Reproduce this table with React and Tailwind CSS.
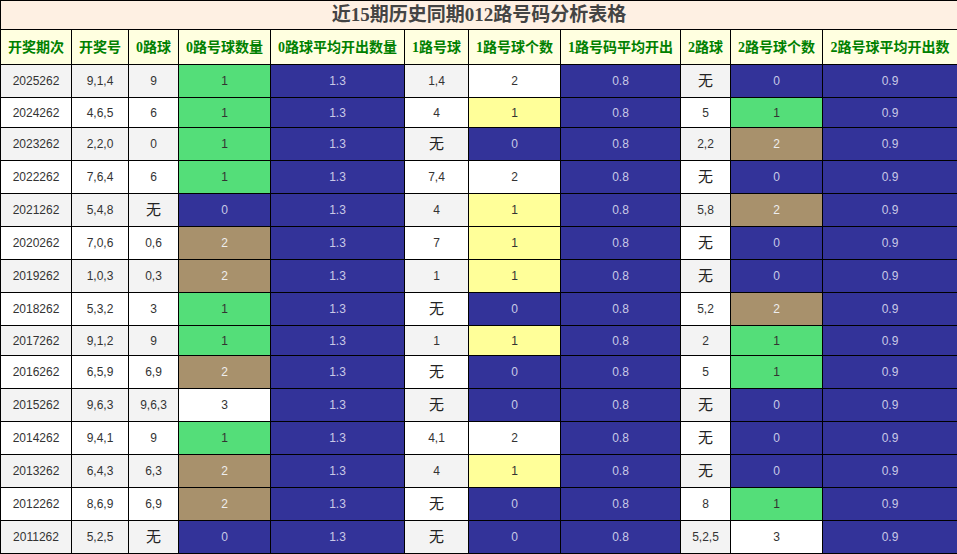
import React from "react";

const headers = [
  "开奖期次",
  "开奖号",
  "0路球",
  "0路号球数量",
  "0路球平均开出数量",
  "1路号球",
  "1路号球个数",
  "1路号码平均开出",
  "2路球",
  "2路号球个数",
  "2路号球平均开出数",
];

const widths = [71, 57, 50, 92, 134, 64, 92, 120, 50, 92, 135];

// [期次, 开奖号, 0路球, 0路个数, 1路球, 1路个数, 2路球, 2路个数]
const rows = [
  ["2025262", "9,1,4", "9", 1, "1,4", 2, "无", 0],
  ["2024262", "4,6,5", "6", 1, "4", 1, "5", 1],
  ["2023262", "2,2,0", "0", 1, "无", 0, "2,2", 2],
  ["2022262", "7,6,4", "6", 1, "7,4", 2, "无", 0],
  ["2021262", "5,4,8", "无", 0, "4", 1, "5,8", 2],
  ["2020262", "7,0,6", "0,6", 2, "7", 1, "无", 0],
  ["2019262", "1,0,3", "0,3", 2, "1", 1, "无", 0],
  ["2018262", "5,3,2", "3", 1, "无", 0, "5,2", 2],
  ["2017262", "9,1,2", "9", 1, "1", 1, "2", 1],
  ["2016262", "6,5,9", "6,9", 2, "无", 0, "5", 1],
  ["2015262", "9,6,3", "9,6,3", 3, "无", 0, "无", 0],
  ["2014262", "9,4,1", "9", 1, "4,1", 2, "无", 0],
  ["2013262", "6,4,3", "6,3", 2, "4", 1, "无", 0],
  ["2012262", "8,6,9", "6,9", 2, "无", 0, "8", 1],
  ["2011262", "5,2,5", "无", 0, "无", 0, "5,2,5", 3],
];

const cell = "border border-black text-center p-0";

const countStyle = (n, yellowOne) => {
  if (n === 0) return "bg-[#333399] text-[#c9c9e6]";
  if (n === 1) return yellowOne ? "bg-[#ffff99] text-[#333]" : "bg-[#54de79] text-[#333]";
  if (n === 2 && !yellowOne) return "bg-[#a8916c] text-[#eeeeee]";
  return "bg-white text-[#333]";
};

const Num = ({ v }) =>
  v === "无" ? (
    <span className="text-[15px] leading-none font-['Noto_Sans_CJK_SC',sans-serif] text-[#222]">无</span>
  ) : (
    v
  );

const App = () => {
  return (
    <div className="w-[957px] h-[554px] bg-white overflow-hidden font-['Liberation_Sans','Noto_Sans_CJK_SC',sans-serif] text-[12px] text-[#333]">
      <table className="w-[957px] table-fixed border-collapse">
        <colgroup>
          {widths.map((w, i) => (
            <col key={i} style={{ width: w }} />
          ))}
        </colgroup>
        <thead>
          <tr className="h-[29px]">
            <th
              colSpan={11}
              className="border border-black bg-[#fef0e3] p-0 text-center text-[19px] leading-[26px] font-bold text-[#444] font-['Liberation_Serif','Noto_Sans_CJK_SC',serif]"
            >
              近15期历史同期012路号码分析表格
            </th>
          </tr>
          <tr className="h-[35px]">
            {headers.map((h) => (
              <th
                key={h}
                className="border border-black bg-[#ffffe0] text-center text-[14px] font-bold text-[#008000] font-['Liberation_Serif','Noto_Sans_CJK_SC',serif] whitespace-nowrap"
              >
                {h}
              </th>
            ))}
          </tr>
        </thead>
        <tbody>
          {rows.map((r, i) => {
            const stripe = i % 2 === 0 ? "bg-[#f3f3f3]" : "bg-white";
            const tall = r.includes("无");
            return (
              <tr key={r[0]} className={tall ? "h-[33px]" : "h-[30px]"}>
                <td className={`${cell} ${stripe}`}>{r[0]}</td>
                <td className={`${cell} ${stripe}`}>{r[1]}</td>
                <td className={`${cell} ${stripe}`}>
                  <Num v={r[2]} />
                </td>
                <td className={`${cell} ${countStyle(r[3], false)}`}>{r[3]}</td>
                <td className={`${cell} bg-[#333399] text-[#c9c9e6]`}>1.3</td>
                <td className={`${cell} ${stripe}`}>
                  <Num v={r[4]} />
                </td>
                <td className={`${cell} ${countStyle(r[5], true)}`}>{r[5]}</td>
                <td className={`${cell} bg-[#333399] text-[#c9c9e6]`}>0.8</td>
                <td className={`${cell} ${stripe}`}>
                  <Num v={r[6]} />
                </td>
                <td className={`${cell} ${countStyle(r[7], false)}`}>{r[7]}</td>
                <td className={`${cell} bg-[#333399] text-[#c9c9e6]`}>0.9</td>
              </tr>
            );
          })}
        </tbody>
      </table>
    </div>
  );
};

export default App;
